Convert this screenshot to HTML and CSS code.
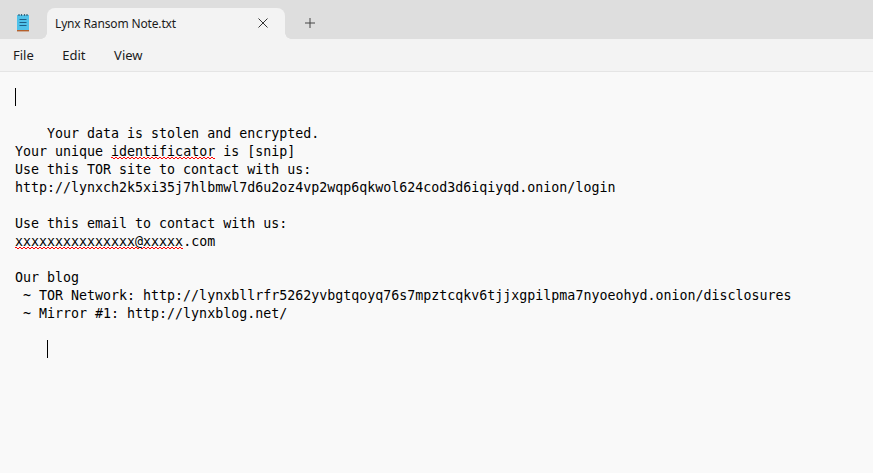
FILE: index.html
```html
<!DOCTYPE html>
<html lang="en">
<head>
  <meta charset="UTF-8">
  <title>Lynx Ransom Note.txt - Notepad</title>
  <link rel="stylesheet" href="styles.css">
</head>
<body>
  <div class="window">
    <div class="tab-bar">
      <div class="app-icon">
        <svg width="14" height="20" viewBox="0 0 14 20">
          <rect x="1" y="2" width="12" height="15" fill="#4fc1e9"/>
          <rect x="1" y="17" width="12" height="1.4" fill="#b5602c"/>
          <path d="M3 1v2M5.500 1v2M8.500 1v2M11 1v2" stroke="#33667f" stroke-width="1.200"/>
          <path d="M3.500 6.500h7M3.500 9.500h7M3.500 12.500h7" stroke="#1d5f86" stroke-width="1.200"/>
        </svg>
      </div>
      <div class="tab">
        <span class="tab-title">Lynx Ransom Note.txt</span>
        <svg class="tab-close" width="10" height="10" viewBox="0 0 10 10">
          <path d="M.5 .5l9 9M9.500 .5l-9 9" stroke="#333" stroke-width="1" fill="none"/>
        </svg>
      </div>
      <svg class="tab-add" width="10" height="10" viewBox="0 0 10 10">
        <path d="M5 0v10M0 5h10" stroke="#444" stroke-width="1" fill="none"/>
      </svg>
    </div>
    <div class="menu-bar">
      <span class="menu-item">File</span>
      <span class="menu-item">Edit</span>
      <span class="menu-item">View</span>
    </div>
    <pre class="editor"><span class="caret"></span>

    Your data is stolen and encrypted.
Your unique <span class="misspelled">identificator</span> is [snip]
Use this TOR site to contact with us:
http://lynxch2k5xi35j7hlbmwl7d6u2oz4vp2wqp6qkwol624cod3d6iqiyqd.onion/login

Use this email to contact with us:
<span class="misspelled">xxxxxxxxxxxxxxx@xxxxx</span>.com

Our blog
 ~ TOR Network: http://lynxbllrfr5262yvbgtqoyq76s7mpztcqkv6tjjxgpilpma7nyoeohyd.onion/disclosures
 ~ Mirror #1: http://lynxblog.net/

    <span class="caret"></span></pre>
  </div>
</body>
</html>
```

FILE: styles.css
```css
html, body {
  margin: 0;
  height: 100%;
  overflow: hidden;
}
body {
  font-family: 'Noto Sans', Arial, sans-serif;
  color: #1b1b1b;
}
.window {
  display: flex;
  flex-direction: column;
  height: 100%;
  background: #f9f9f9;
}
.tab-bar {
  display: flex;
  align-items: flex-end;
  height: 39px;
  background: #dedede;
  box-sizing: border-box;
  padding-top: 8px;
}
.app-icon {
  width: 47px;
  height: 31px;
  display: flex;
  justify-content: center;
  align-items: flex-start;
  padding: 5px 1px 0 0;
  box-sizing: border-box;
}
.tab {
  position: relative;
  width: 238px;
  height: 31px;
  background: #f3f3f3;
  border-radius: 8px 8px 0 0;
  display: flex;
  align-items: center;
  justify-content: space-between;
  padding: 0 17px 0 8px;
  box-sizing: border-box;
}
.tab::before,
.tab::after {
  content: "";
  position: absolute;
  bottom: 0;
  width: 6px;
  height: 6px;
}
.tab::before {
  left: -6px;
  background: radial-gradient(circle at 0 0, transparent 5.500px, #f3f3f3 6px);
}
.tab::after {
  right: -6px;
  background: radial-gradient(circle at 100% 0, transparent 5.500px, #f3f3f3 6px);
}
.tab-title {
  font-size: 12px;
  letter-spacing: -0.15px;
}
.tab-close {
  margin-bottom: 2px;
}
.tab-add {
  margin: 0 0 11px 20px;
}
.menu-bar {
  display: flex;
  gap: 28.500px;
  align-items: center;
  height: 32px;
  padding-left: 13px;
  background: #f3f3f3;
  border-bottom: 1px solid #e5e5e5;
  font-size: 13px;
}
.editor {
  flex: 1;
  margin: 0;
  padding: 17px 15px 0;
  font-family: 'DejaVu Sans Mono', 'Liberation Mono', monospace;
  font-size: 13.300px;
  line-height: 18px;
  color: #000;
  background: #f9f9f9;
}
.caret {
  display: inline-block;
  width: 1px;
  height: 18px;
  margin: -1px -1px 0 0;
  background: #000;
  vertical-align: top;
}
/* spell check squiggle, 4px checker pattern */
.misspelled {
  background-image:
    linear-gradient(90deg, #f00 50%, transparent 50%),
    linear-gradient(90deg, transparent 50%, #f00 50%);
  background-size: 4px 1px, 4px 1px;
  background-position: 0 calc(100% - 1px), 0 100%;
  background-repeat: repeat-x;
}
```
